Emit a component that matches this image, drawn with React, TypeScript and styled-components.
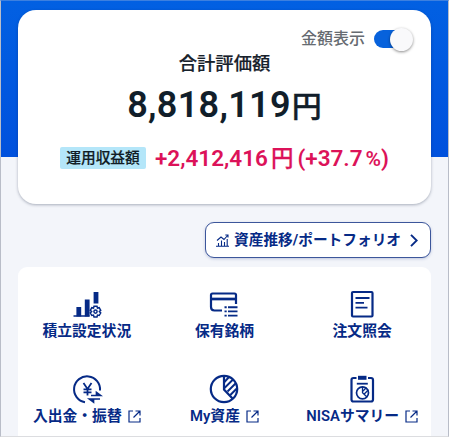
import React from "react";
import styled, { createGlobalStyle } from "styled-components";

const NAVY = "#062a86";

const GlobalStyle = createGlobalStyle`
  *, *::before, *::after { box-sizing: border-box; }
  body { margin: 0; background: #f3f5fa; font-family: Roboto, "Noto Sans CJK JP", sans-serif; }
`;

const Screen = styled.main`
  height: 437px;
  overflow: hidden;
  padding: 9px 17px 0 17px;
  border: 1px solid #b9bdc8;
  border-top-color: #3d80df;
  border-bottom-color: #dcdde0;
  background: linear-gradient(#0260e2, #0051dd) 0 0 / 100% 156px no-repeat, #f3f5fa;
`;

const SummaryCard = styled.section`
  height: 194px;
  display: flex;
  flex-direction: column;
  border-radius: 18px;
  background: #fff;
  box-shadow: 0 1px 3px rgba(30, 40, 70, 0.35);
  white-space: nowrap;
`;

const ToggleRow = styled.div`
  display: flex;
  justify-content: flex-end;
  align-items: center;
  height: 26px;
  margin-top: 16px;
  padding-right: 18px;
  gap: 9px;
`;

const ToggleLabel = styled.span`
  font-size: 16px;
  font-weight: 500;
  line-height: 24px;
  color: #666b71;
`;

const Switch = styled.button`
  display: flex;
  justify-content: flex-end;
  align-items: center;
  width: 39px;
  height: 18px;
  padding: 0;
  border: 0;
  border-radius: 9px;
  background: linear-gradient(90deg, #0762dc 30px, transparent 30px);
`;

const Knob = styled.span`
  width: 23px;
  height: 23px;
  border-radius: 50%;
  background: #f9f9fb;
  box-shadow: 0 1px 3px rgba(0, 0, 0, 0.45);
`;

const Title = styled.h1`
  margin: 0;
  height: 24px;
  font-size: 18.3px;
  font-weight: 500;
  line-height: 24px;
  text-align: center;
  color: #17212b;
  -webkit-text-stroke: 0.2px currentColor;
`;

const Total = styled.div`
  display: flex;
  justify-content: center;
  align-items: baseline;
  height: 44px;
  margin-top: 7px;
  line-height: 44px;
  font-size: 36px;
  font-weight: 600;
  letter-spacing: 0.3px;
  color: #111e2a;
`;

const TotalUnit = styled.span`
  margin-left: 1px;
  font-size: 30px;
  font-weight: 500;
  letter-spacing: 0;
  -webkit-text-stroke: 0.4px currentColor;
`;

const GainRow = styled.div`
  display: flex;
  align-items: center;
  height: 24px;
  margin: 19px 0 0 42px;
`;

const GainLabel = styled.span`
  width: 86px;
  height: 22px;
  margin-right: 9px;
  border-radius: 2px;
  background: #b4e6f9;
  font-size: 14.7px;
  font-weight: 500;
  line-height: 22px;
  text-align: center;
  color: #101c25;
  -webkit-text-stroke: 0.2px currentColor;
`;

const Gain = styled.span`
  display: flex;
  align-items: baseline;
  line-height: 24px;
  font-size: 22.5px;
  font-weight: 600;
  color: #dc1259;
`;

const GainUnit = styled.span`
  margin: 0 4px 0 3px;
  font-size: 22.5px;
  font-weight: 500;
  -webkit-text-stroke: 0.25px currentColor;
`;

const Percent = styled.span`
  margin-left: 3px;
  font-size: 21px;
`;

const PortfolioButton = styled.button`
  display: flex;
  align-items: center;
  width: 226px;
  height: 36px;
  margin: 18px 0 9px auto;
  padding: 0 12px 0 10px;
  border: 1px solid #3c569b;
  border-radius: 9px;
  background: #fff;
  box-shadow: 0 1px 3px rgba(30, 60, 140, 0.25);
  color: ${NAVY};
  font-family: inherit;
  font-size: 14.7px;
  font-weight: 700;
  white-space: nowrap;
`;

const ButtonText = styled.span`
  flex: 1;
  margin-left: 5px;
  line-height: 22px;
  text-align: left;
`;

const Menu = styled.nav`
  display: grid;
  grid-template-columns: repeat(3, 1fr);
  grid-template-rows: 85px 85px;
  height: 180px;
  padding-top: 21px;
  border-radius: 9px;
  background: #fff;
  color: ${NAVY};
`;

const MenuItem = styled.a`
  display: flex;
  flex-direction: column;
  align-items: center;
  white-space: nowrap;
`;

const MenuIcon = styled.svg`
  width: 32px;
  height: 32px;
  fill: none;
  stroke: currentColor;
  stroke-width: 2.2;
`;

const MenuLabel = styled.span`
  display: flex;
  align-items: center;
  height: 22px;
  font-size: 14.8px;
  font-weight: 600;
  line-height: 22px;
`;

const LinkIcon = styled.svg`
  width: 13px;
  height: 13px;
  margin-left: 6px;
  fill: none;
  stroke: currentColor;
  stroke-width: 1.2;
`;

const ExternalMark = () => (
  <LinkIcon viewBox="0 0 13 13">
    <path d="M5 1H1v11h11V8M7.5 1H12v4.5M12 1L5.5 7.5" />
  </LinkIcon>
);

const TrendIcon = () => (
  <svg width="13" height="13" viewBox="0 0 13 13" fill="none" stroke="currentColor" strokeWidth="1.1">
    <path d="M0 12.3h13M2.5 12V9M5.5 12V6.5M8.5 12V8M11.2 12V5M1 6.5L5 3l3 2.5L12 1M9.3 1H12v2.5" />
  </svg>
);

const ChevronIcon = () => (
  <svg width="8" height="13" viewBox="0 0 8 13" fill="none" stroke="currentColor" strokeWidth="1.9">
    <path d="M1 0.8L6.7 6.5L1 12.2" />
  </svg>
);

const SavingsIcon = () => (
  <MenuIcon viewBox="0 0 32 32">
    <path d="M2.5 28h16" strokeWidth="1.5" />
    <path d="M7.8 28.5v-9.5M16.2 28.5V11.5M25 15.5V4" strokeWidth="4.8" />
    <path
      d="M23 18.3h3l.5 1.8 1.7-.4 1.5 2.6-1.3 1.3 1.3 1.3-1.5 2.6-1.7-.4-.5 1.8h-3l-.5-1.8-1.7.4-1.5-2.6 1.3-1.3-1.3-1.3 1.5-2.6 1.7.4z"
      fill="#fff"
      strokeWidth="1.5"
    />
    <circle cx="24.5" cy="23.6" r="1.6" strokeWidth="1.5" />
  </MenuIcon>
);

const HoldingsIcon = () => (
  <MenuIcon viewBox="0 0 32 32">
    <path d="M14 22.5H6.5Q3 22.5 3 19V7Q3 5.5 4.5 5.5H26.5Q28 5.5 28 7V16" />
    <path d="M3 11H28" strokeWidth="2.7" />
    <path d="M16.5 19.2h2.2M16.5 23.4h2.2M16.5 27.6h2.2M20 19.2h9.5M20 23.4h9.5M20 27.6h9.5" strokeWidth="1.9" />
  </MenuIcon>
);

const OrdersIcon = () => (
  <MenuIcon viewBox="0 0 32 32">
    <rect x="6" y="4" width="20.5" height="24.5" rx="1" />
    <path d="M9.5 10h14M9.5 14.8h8.5M9.5 19.7h12" strokeWidth="1.8" />
  </MenuIcon>
);

const TransferIcon = () => (
  <MenuIcon viewBox="0 0 32 32">
    <path d="M14 29.2A13 13 0 1 1 29 17.5" strokeWidth="2" />
    <path d="M12.5 10l4 6 4-6M16.5 16V22.5M12.5 16.3h8M12.5 19.3h8" strokeWidth="1.8" />
    <path d="M20 22.5H29.5L25.5 19.5V22.3M29 26H18.5L22.5 29V26.3" strokeWidth="1.7" fill="currentColor" />
  </MenuIcon>
);

const AssetsIcon = () => (
  <MenuIcon viewBox="0 0 32 32">
    <circle cx="16" cy="16" r="13.2" />
    <path d="M16 3V16.5L25 26" />
    <path d="M16 9.5L21 4M16.5 15L25 6.5M19.5 18.5L28 10M22.3 22L29.3 15" strokeWidth="1.9" />
  </MenuIcon>
);

const SummaryIcon = () => (
  <MenuIcon viewBox="0 0 32 32">
    <path d="M10.5 5H7.5Q5.5 5 5.5 7V26.5Q5.5 28.5 7.5 28.5H25Q27 28.5 27 26.5V7Q27 5 25 5H22" />
    <path d="M12 4.8h8.5" strokeWidth="4" />
    <path d="M10.8 10.7h11" strokeWidth="1.8" />
    <circle cx="16.5" cy="19.8" r="6" strokeWidth="1.7" />
    <path d="M16.5 13.5V19.8L21 24M16.5 18.5l4-4M18 21.2l4.5-4.5" strokeWidth="1.3" />
  </MenuIcon>
);

const items = [
  { label: "積立設定状況", Icon: SavingsIcon },
  { label: "保有銘柄", Icon: HoldingsIcon },
  { label: "注文照会", Icon: OrdersIcon },
  { label: "入出金・振替", Icon: TransferIcon, external: true },
  { label: "My資産", Icon: AssetsIcon, external: true },
  { label: "NISAサマリー", Icon: SummaryIcon, external: true },
];

export default function App() {
  return (
    <>
      <GlobalStyle />
      <Screen lang="ja">
        <SummaryCard>
          <ToggleRow>
            <ToggleLabel>金額表示</ToggleLabel>
            <Switch role="switch" aria-checked="true" aria-label="金額表示">
              <Knob />
            </Switch>
          </ToggleRow>
          <Title>合計評価額</Title>
          <Total>
            8,818,119<TotalUnit>円</TotalUnit>
          </Total>
          <GainRow>
            <GainLabel>運用収益額</GainLabel>
            <Gain>
              +2,412,416<GainUnit>円</GainUnit>(+37.7<Percent>%</Percent>)
            </Gain>
          </GainRow>
        </SummaryCard>
        <PortfolioButton>
          <TrendIcon />
          <ButtonText>資産推移/ポートフォリオ</ButtonText>
          <ChevronIcon />
        </PortfolioButton>
        <Menu>
          {items.map(({ label, Icon, external }) => (
            <MenuItem key={label}>
              <Icon />
              <MenuLabel>
                {label}
                {external && <ExternalMark />}
              </MenuLabel>
            </MenuItem>
          ))}
        </Menu>
      </Screen>
    </>
  );
}
